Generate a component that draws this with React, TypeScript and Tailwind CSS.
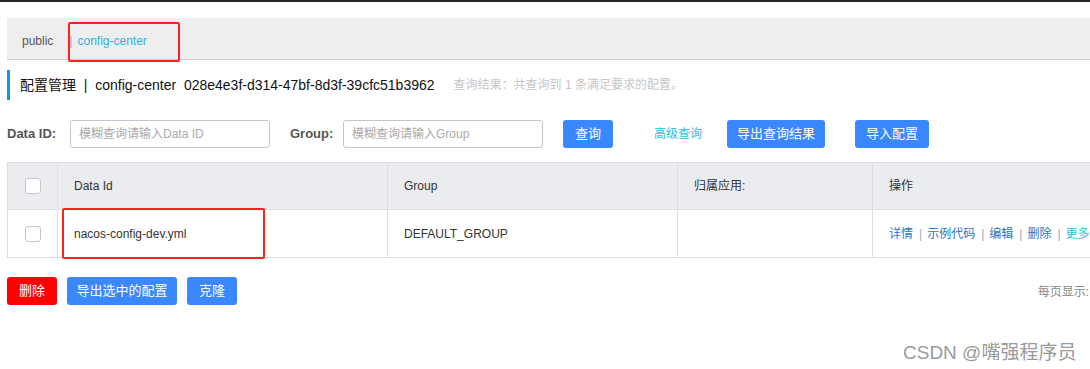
import React from "react";

const font = { fontFamily: '"Liberation Sans", "Noto Sans CJK SC", sans-serif' };

function Checkbox() {
  return <div className="w-[16px] h-[16px] rounded-[3px] border border-[#c4c6cf] bg-white" />;
}

export default function App() {
  return (
    <div className="relative w-[1090px] h-[369px] overflow-hidden bg-white text-[12px] text-[#333]" style={font}>
      <div className="h-[2px] bg-[#23272b]" />
      <div className="pl-[7px] pt-[16px] w-[1200px]">
        {/* tab band */}
        <div className="h-[42px] bg-[#eeeeee] border-b border-[#cccccc] flex items-center pl-[15px] pt-[5px] text-[12px]">
          <span className="text-[#555]">public</span>
          <span className="ml-[16px] text-[#8aa8c8]">|</span>
          <span className="ml-[5px] text-[#29b6dd]">config-center</span>
        </div>
        {/* title */}
        <div className="mt-[10px] h-[30px] flex items-center border-l-[3px] border-[#0a9bd4] pl-[10px]">
          <span className="text-[14px] text-[#111]">配置管理&nbsp;&nbsp;|&nbsp;&nbsp;config-center&nbsp;&nbsp;028e4e3f-d314-47bf-8d3f-39cfc51b3962</span>
          <span className="ml-[19px] text-[12px] text-[#c6c6c6]">查询结果：共查询到 1 条满足要求的配置。</span>
        </div>
        {/* search row */}
        <div className="mt-[20px] h-[28px] flex items-center">
          <span className="font-bold text-[13px] text-[#555] w-[63px]">Data ID:</span>
          <div className="w-[200px] h-[28px] border border-[#c4c6cf] rounded-[3px] flex items-center pl-[8px] text-[#aaa]">模糊查询请输入Data ID</div>
          <span className="ml-[20px] font-bold text-[13px] text-[#555] w-[53px]">Group:</span>
          <div className="w-[200px] h-[28px] border border-[#c4c6cf] rounded-[3px] flex items-center pl-[8px] text-[#aaa]">模糊查询请输入Group</div>
          <div className="ml-[20px] w-[50px] h-[28px] rounded-[3px] bg-[#3a88fd] text-white flex items-center justify-center text-[13px]">查询</div>
          <span className="ml-[41px] text-[#22c4e0] text-[12px]">高级查询</span>
          <div className="ml-[25px] w-[98px] h-[28px] rounded-[3px] bg-[#3a88fd] text-white flex items-center justify-center text-[13px]">导出查询结果</div>
          <div className="ml-[30px] w-[74px] h-[28px] rounded-[3px] bg-[#3a88fd] text-white flex items-center justify-center text-[13px]">导入配置</div>
        </div>
        {/* table */}
        <div className="mt-[14px] border-t border-b border-l border-[#dcdee3]">
          <div className="flex h-[47px] bg-[#ebecf0] border-b border-[#dcdee3]">
            <div className="w-[50px] flex items-center justify-center border-r border-[#dcdee3]"><Checkbox /></div>
            <div className="w-[330px] flex items-center pl-[16px] border-r border-[#dcdee3]">Data Id</div>
            <div className="w-[290px] flex items-center pl-[16px] border-r border-[#dcdee3]">Group</div>
            <div className="w-[195px] flex items-center pl-[16px] border-r border-[#dcdee3]">归属应用:</div>
            <div className="flex-1 flex items-center pl-[16px]">操作</div>
          </div>
          <div className="flex h-[47px] bg-white">
            <div className="w-[50px] flex items-center justify-center border-r border-[#dcdee3]"><Checkbox /></div>
            <div className="w-[330px] flex items-center pl-[16px] border-r border-[#dcdee3]">nacos-config-dev.yml</div>
            <div className="w-[290px] flex items-center pl-[16px] border-r border-[#dcdee3]">DEFAULT_GROUP</div>
            <div className="w-[195px] flex items-center pl-[16px] border-r border-[#dcdee3]"></div>
            <div className="flex-1 flex items-center pl-[16px] text-[#2a74c6]">
              <span>详情</span>
              <span className="ml-[6px] mr-[5px] text-[#9ab]">|</span>
              <span>示例代码</span>
              <span className="ml-[6px] mr-[5px] text-[#9ab]">|</span>
              <span>编辑</span>
              <span className="ml-[6px] mr-[5px] text-[#9ab]">|</span>
              <span>删除</span>
              <span className="ml-[6px] mr-[5px] text-[#9ab]">|</span>
              <span className="text-[#22c4e0]">更多</span>
            </div>
          </div>
        </div>
        {/* bottom */}
        <div className="mt-[19px] flex items-center w-[1083px]">
          <div className="w-[50px] h-[28px] rounded-[3px] bg-[#ff0000] text-white flex items-center justify-center text-[13px]">删除</div>
          <div className="ml-[10px] w-[110px] h-[28px] rounded-[3px] bg-[#3a88fd] text-white flex items-center justify-center text-[13px]">导出选中的配置</div>
          <div className="ml-[10px] w-[50px] h-[28px] rounded-[3px] bg-[#3a88fd] text-white flex items-center justify-center text-[13px]">克隆</div>
          <div className="ml-auto text-[#888] text-[12px] mt-[2px] mr-[1px] whitespace-nowrap">每页显示:</div>
        </div>
      </div>
      {/* annotations */}
      <div className="absolute left-[68px] top-[22px] w-[112px] h-[40px] border-[2px] border-[#ff2020] rounded-[2px]" />
      <div className="absolute left-[62px] top-[208px] w-[203px] h-[51px] border-[2px] border-[#ff2020] rounded-[2px]" />
      <div className="absolute left-[903px] top-[339px] text-[19px] text-[#9a9a9a]" style={{ textShadow: "0 0 1px #fff" }}>CSDN @嘴强程序员</div>
    </div>
  );
}
